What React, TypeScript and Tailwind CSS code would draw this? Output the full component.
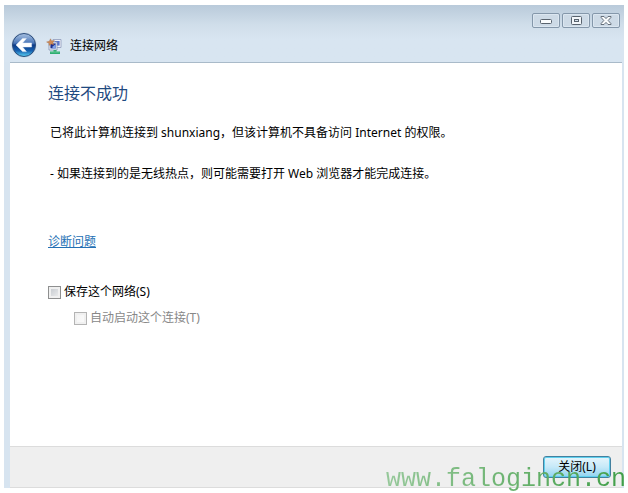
import type { InputHTMLAttributes, ReactNode } from 'react';

interface CaptionButtonProps {
  label: string;
  children: ReactNode;
}

function CaptionButton({ label, children }: CaptionButtonProps) {
  return (
    <button
      type="button"
      aria-label={label}
      className="flex h-[15px] w-7 items-center justify-center rounded-xs border border-[#8497aa] bg-[#cddae6] shadow-[inset_0_0_0_1px_#dbe6f0]"
    >
      {children}
    </button>
  );
}

function BackIcon() {
  return (
    <svg viewBox="0 0 26 26" className="size-[26px]" aria-hidden="true">
      <defs>
        <linearGradient id="back-fill" x1="0" y1="0" x2="0" y2="1">
          <stop offset="0" stopColor="#a9c2e2" />
          <stop offset="0.42" stopColor="#4a76b8" />
          <stop offset="0.5" stopColor="#0c3a86" />
          <stop offset="0.75" stopColor="#1560b0" />
          <stop offset="1" stopColor="#5cd4f5" />
        </linearGradient>
      </defs>
      <circle cx="13" cy="13" r="12.5" fill="#c3d3e3" />
      <circle cx="13" cy="13" r="11.5" fill="url(#back-fill)" stroke="#2c4d7c" strokeWidth="1" />
      <path
        d="M5 13 L11.6 6.4 H15.4 L11.6 11 H20.6 V15 H11.6 L15.4 19.6 H11.6 Z"
        fill="#fff"
        stroke="#e6eef8"
        strokeWidth="0.5"
      />
    </svg>
  );
}

function NetworkIcon() {
  return (
    <svg viewBox="0 0 16 17" className="h-[17px] w-4" aria-hidden="true">
      <path d="M7 1.5 H15 V9.5 H7 Z" fill="#eef2fa" stroke="#8f9bbb" strokeWidth="0.8" />
      <path d="M8.5 3 H13.6 V7.6 H8.5 Z" fill="#5a74cc" />
      <path d="M3 4 H11 V12 H3 Z" fill="#f0f3fa" stroke="#8490b0" strokeWidth="0.8" />
      <path d="M4.4 5.4 H9.8 V10.4 H4.4 Z" fill="#1f2f8c" />
      <path d="M7 8.2 L9.8 6 V10.4 H6 Z" fill="#7ea2ea" />
      <path
        d="M4.5 0.8 L5.6 3 L8.4 2.6 L6.8 4.6 L7.6 6.8 L5.2 6 L3 7.4 L3.2 5.2 L0.6 4 L3.4 3.2 Z"
        fill="#d08a55"
        stroke="#a76b42"
        strokeWidth="0.4"
      />
      <path d="M7.5 12 H10.5 V13.4 H14 V16 H4 V13.4 H7.5 Z" fill="#2fae72" />
      <path d="M4.5 14 H13.5" stroke="#86dcb0" strokeWidth="0.6" />
    </svg>
  );
}

interface CheckboxProps extends InputHTMLAttributes<HTMLInputElement> {
  id: string;
  label: string;
}

function Checkbox({ id, label, ...rest }: CheckboxProps) {
  return (
    <div className="flex h-4 items-center gap-[3px]">
      <input
        id={id}
        type="checkbox"
        className="peer size-[13px] appearance-none border border-[#8e8f8f] bg-linear-to-br from-[#c0c5cb] to-[#f2f2f2] shadow-[inset_0_0_0_2px_#f0f0f0] checked:bg-[#3c7fb1] disabled:border-[#b4b4b4] disabled:from-[#f3f3f3] disabled:to-[#fbfbfb]"
        {...rest}
      />
      <label htmlFor={id} className="leading-4 peer-disabled:text-[#888888]">
        {label}
      </label>
    </div>
  );
}

export default function App() {
  return (
    <div className="min-h-screen bg-white px-1 py-[5px] font-['Noto_Sans','Noto_Sans_CJK_SC',sans-serif] text-xs text-black">
      <div className="relative flex min-h-[calc(100vh-10px)] flex-col bg-[#d7e4f0] pr-0.5 pl-1.5">
        {/* Title bar */}
        <header className="-mr-0.5 -ml-1.5 flex flex-col bg-linear-to-b from-[#b9cada] from-0% via-[#d0deea] via-35% to-[#d8e5f1] to-60%">
          <div className="flex h-[27px] items-start justify-end gap-0.5 pt-2 pr-1">
            <CaptionButton label="最小化">
              <svg viewBox="0 0 12 9" className="h-[9px] w-3" aria-hidden="true">
                <rect x="0.5" y="3.5" width="11" height="4" rx="1" fill="#fafcfd" stroke="#59636e" />
              </svg>
            </CaptionButton>
            <CaptionButton label="最大化">
              <svg viewBox="0 0 11 9" className="h-[9px] w-[11px]" aria-hidden="true">
                <rect x="0.5" y="0.5" width="10" height="8" rx="1" fill="#f2f6fa" stroke="#59636e" />
                <rect x="3.5" y="3.5" width="4" height="2" fill="#d5e0ea" stroke="#59636e" />
              </svg>
            </CaptionButton>
            <CaptionButton label="关闭窗口">
              <svg viewBox="0 0 12 9" className="h-[9px] w-3" aria-hidden="true">
                <path
                  d="M1 0.5 H4 L6 2.6 L8 0.5 H11 V1.3 L8.2 4.5 L11 7.7 V8.5 H8 L6 6.4 L4 8.5 H1 V7.7 L3.8 4.5 L1 1.3 Z"
                  fill="#fafcfd"
                  stroke="#59636e"
                  strokeWidth="0.9"
                />
              </svg>
            </CaptionButton>
          </div>
          <div className="flex h-[30px] items-start pl-[7px]">
            <button type="button" aria-label="返回" className="rounded-full">
              <BackIcon />
            </button>
            <div className="flex h-7 items-center gap-2 pl-[9px]">
              <NetworkIcon />
              <h1 className="leading-4">连接网络</h1>
            </div>
          </div>
        </header>

        {/* Wizard page */}
        <main className="flex flex-1 flex-col border-t border-[#a9bac9] bg-white px-[38px] pt-5">
          <h2 className="text-base leading-5 text-[#1f4a80]">连接不成功</h2>
          <div className="flex flex-col gap-[25px] pt-[22px] pl-0.5 leading-4">
            <p>已将此计算机连接到 shunxiang，但该计算机不具备访问 Internet 的权限。</p>
            <p>- 如果连接到的是无线热点，则可能需要打开 Web 浏览器才能完成连接。</p>
          </div>
          <a href="#diagnose" className="mt-[52px] self-start leading-4 text-[#2470b4] underline">
            诊断问题
          </a>
          <div className="flex flex-col gap-2.5 pt-[34px]">
            <Checkbox id="save-network" label="保存这个网络(S)" />
            <div className="pl-[26px]">
              <Checkbox id="auto-connect" label="自动启动这个连接(T)" disabled />
            </div>
          </div>
        </main>

        <footer className="flex h-[42px] items-start justify-end border-t border-b border-[#dcdcdc] bg-[#efefef] pt-[9px] pr-[11px]">
          <button
            type="button"
            className="h-[22px] w-[68px] rounded-[3px] border border-[#43809f] bg-linear-to-b from-[#e6f5fc] from-0% via-[#c6e9f8] via-50% to-[#8fd3f0] to-100% leading-4 shadow-[inset_0_0_0_1px_#5fd0ee]"
          >
            关闭(L)
          </button>
        </footer>

        {/* Site watermark, laid over the footer */}
        <p className="pointer-events-none absolute -right-0.5 -bottom-1.5 bg-linear-to-r from-[#96c89a] to-[#3f9f48] bg-clip-text font-['Liberation_Mono',monospace] text-[25px] leading-7 text-transparent">
          www.falogincn.cn
        </p>
      </div>
    </div>
  );
}
